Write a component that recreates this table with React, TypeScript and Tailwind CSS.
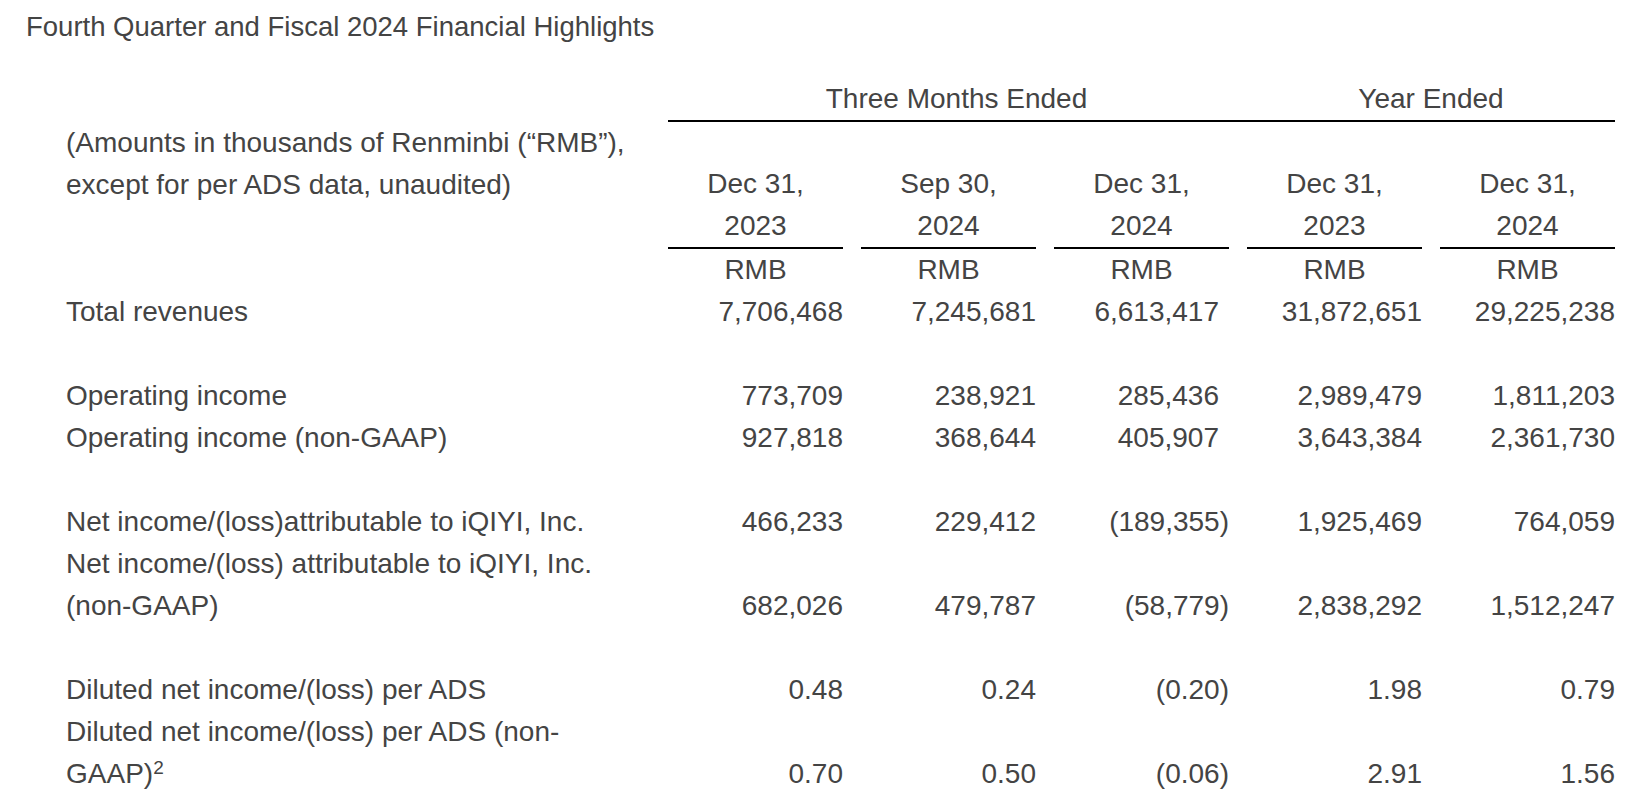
import type { ReactNode } from "react";

type Row = { label: ReactNode; values: string[] } | null;

const rows: Row[] = [
  {
    label: "Total revenues",
    values: ["7,706,468", "7,245,681", "6,613,417", "31,872,651", "29,225,238"],
  },
  null,
  {
    label: "Operating income",
    values: ["773,709", "238,921", "285,436", "2,989,479", "1,811,203"],
  },
  {
    label: "Operating income (non-GAAP)",
    values: ["927,818", "368,644", "405,907", "3,643,384", "2,361,730"],
  },
  null,
  {
    label: "Net income/(loss)attributable to iQIYI, Inc.",
    values: ["466,233", "229,412", "(189,355)", "1,925,469", "764,059"],
  },
  {
    label: "Net income/(loss) attributable to iQIYI, Inc. (non-GAAP)",
    values: ["682,026", "479,787", "(58,779)", "2,838,292", "1,512,247"],
  },
  null,
  {
    label: "Diluted net income/(loss) per ADS",
    values: ["0.48", "0.24", "(0.20)", "1.98", "0.79"],
  },
  {
    label: (
      <>
        Diluted net income/(loss) per ADS (non-GAAP)
        <sup className="text-[19px] leading-none">2</sup>
      </>
    ),
    values: ["0.70", "0.50", "(0.06)", "2.91", "1.56"],
  },
];

const dates = [
  ["Dec 31,", "2023"],
  ["Sep 30,", "2024"],
  ["Dec 31,", "2024"],
  ["Dec 31,", "2023"],
  ["Dec 31,", "2024"],
];

function ValueCell({ value, col }: { value: string; col: number }) {
  const negative = value.startsWith("(");
  // the third column holds negatives, so positives leave room for the ")"
  const padded = col === 2 && !negative;
  return (
    <div className={padded ? "self-end text-right pr-[10px]" : "self-end text-right"}>
      {value}
    </div>
  );
}

export default function App() {
  return (
    <div className="min-h-screen bg-white text-[#444444] font-['Liberation_Sans',Arial,sans-serif]">
      <h1 className="pl-[26px] pt-[6px] text-[27.5px] leading-[42px] font-normal">
        Fourth Quarter and Fiscal 2024 Financial Highlights
      </h1>

      <div className="ml-[66px] mt-[30px] grid grid-cols-[584px_repeat(5,175px)] gap-x-[18px] text-[28px] leading-[42px]">
        <div />
        <div className="col-span-5 grid grid-cols-subgrid border-b-2 border-black">
          <div className="col-span-3 pl-[16px] text-center">Three Months Ended</div>
          <div className="col-span-2 text-center">Year Ended</div>
        </div>

        <div className="w-[575px]">
          (Amounts in thousands of Renminbi (“RMB”), except for per ADS data, unaudited)
        </div>
        {dates.map(([a, b], i) => (
          <div key={i} className="pt-[41px] text-center border-b-2 border-black">
            <div>{a}</div>
            <div>{b}</div>
          </div>
        ))}

        <div />
        {dates.map((_, i) => (
          <div key={i} className="text-center">
            RMB
          </div>
        ))}

        {rows.map((row, r) =>
          row ? (
            <div key={r} className="contents">
              <div className="w-[575px]">{row.label}</div>
              {row.values.map((v, c) => (
                <ValueCell key={c} value={v} col={c} />
              ))}
            </div>
          ) : (
            <div key={r} className="col-span-6 h-[42px]" />
          ),
        )}
      </div>
    </div>
  );
}
